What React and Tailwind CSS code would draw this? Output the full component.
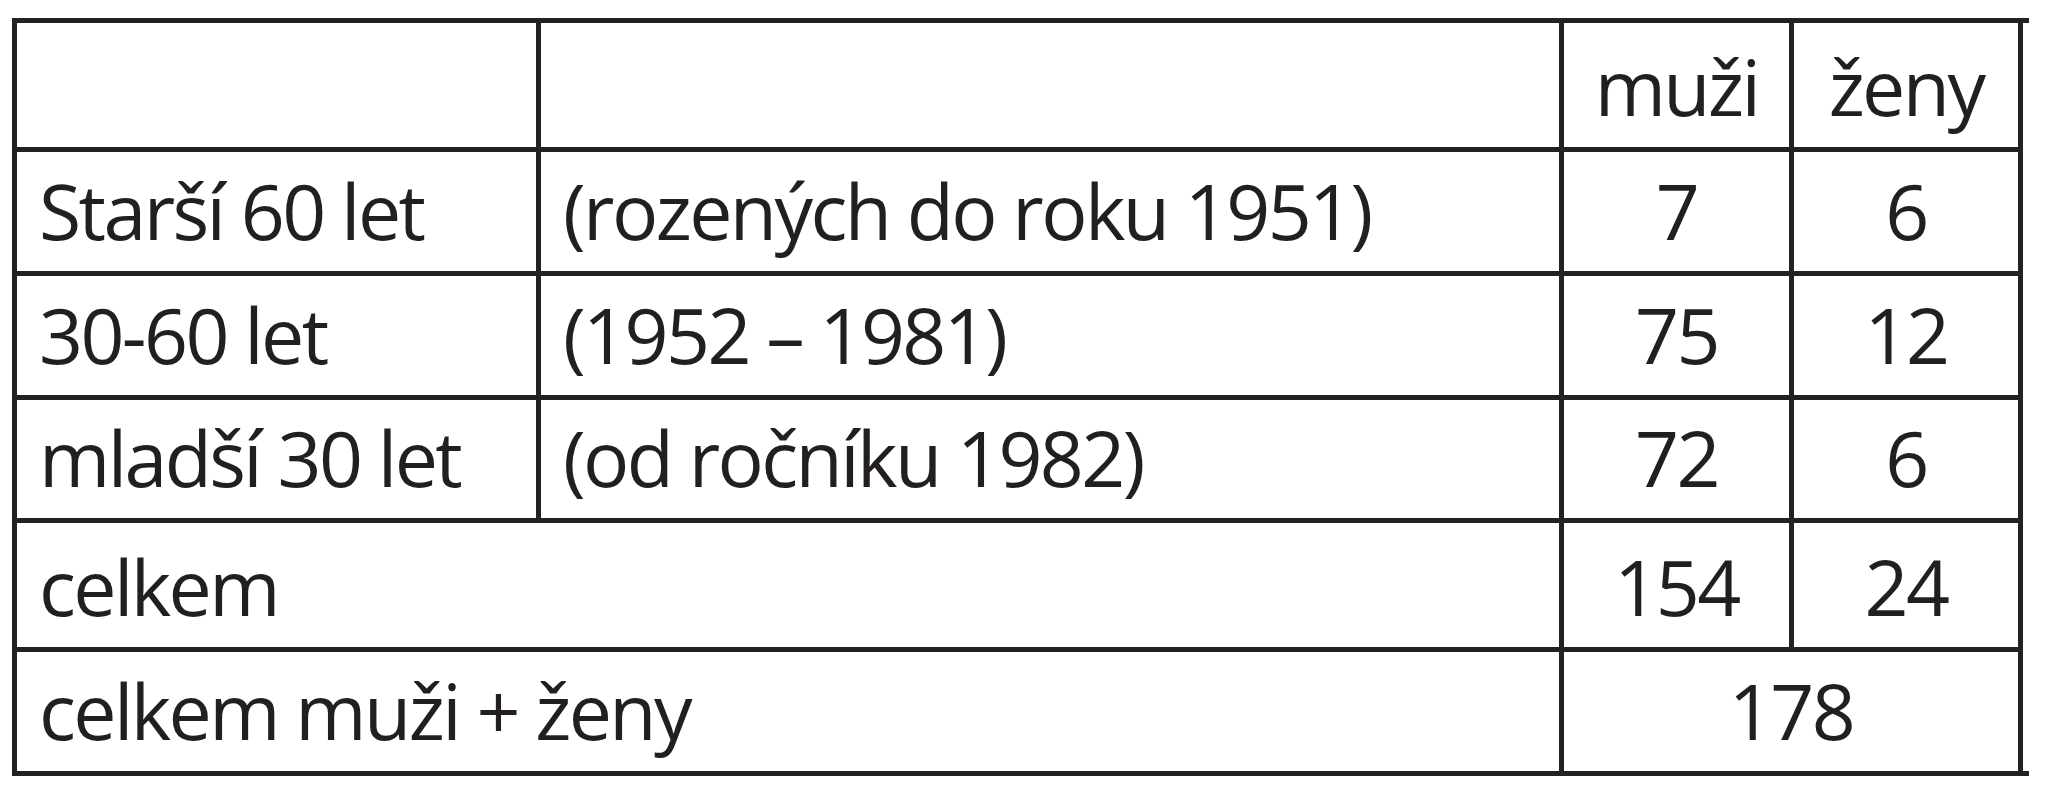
import React from "react";

const cellBase =
  "bg-white flex items-end pb-[22px] leading-none text-[77px] font-medium tracking-[-2.6px] text-[#231f20]";
const left = `${cellBase} justify-start pl-[22px]`;
const center = `${cellBase} justify-center`;

export default function App() {
  return (
    <div className="bg-white w-[2059px] min-h-[800px] pt-[18px] pl-[12px] font-['Open_Sans',sans-serif]">
      <div className="flex flex-col w-[2017px]">
        <div className="h-[5px] w-[2017px] bg-[#222222]" />
        <div className="grid w-[2011px] grid-cols-[519px_1018px_225px_224px] grid-rows-[124px_119px_119px_118px_124px_119px] gap-[5px] bg-[#222222] px-[5px]">
          <div className={left}></div>
          <div className={left}></div>
          <div className={center}>muži</div>
          <div className={center}>ženy</div>

          <div className={left}>Starší 60 let</div>
          <div className={left}>(rozených do roku 1951)</div>
          <div className={center}>7</div>
          <div className={center}>6</div>

          <div className={left}>30-60 let</div>
          <div className={left}>(1952 – 1981)</div>
          <div className={center}>75</div>
          <div className={center}>12</div>

          <div className={left}>mladší 30 let</div>
          <div className={left}>(od ročníku 1982)</div>
          <div className={center}>72</div>
          <div className={center}>6</div>

          <div className={`${left} col-span-2`}>celkem</div>
          <div className={center}>154</div>
          <div className={center}>24</div>

          <div className={`${left} col-span-2`}>celkem muži + ženy</div>
          <div className={`${center} col-span-2`}>178</div>
        </div>
        <div className="h-[5px] w-[2017px] bg-[#222222]" />
      </div>
    </div>
  );
}
